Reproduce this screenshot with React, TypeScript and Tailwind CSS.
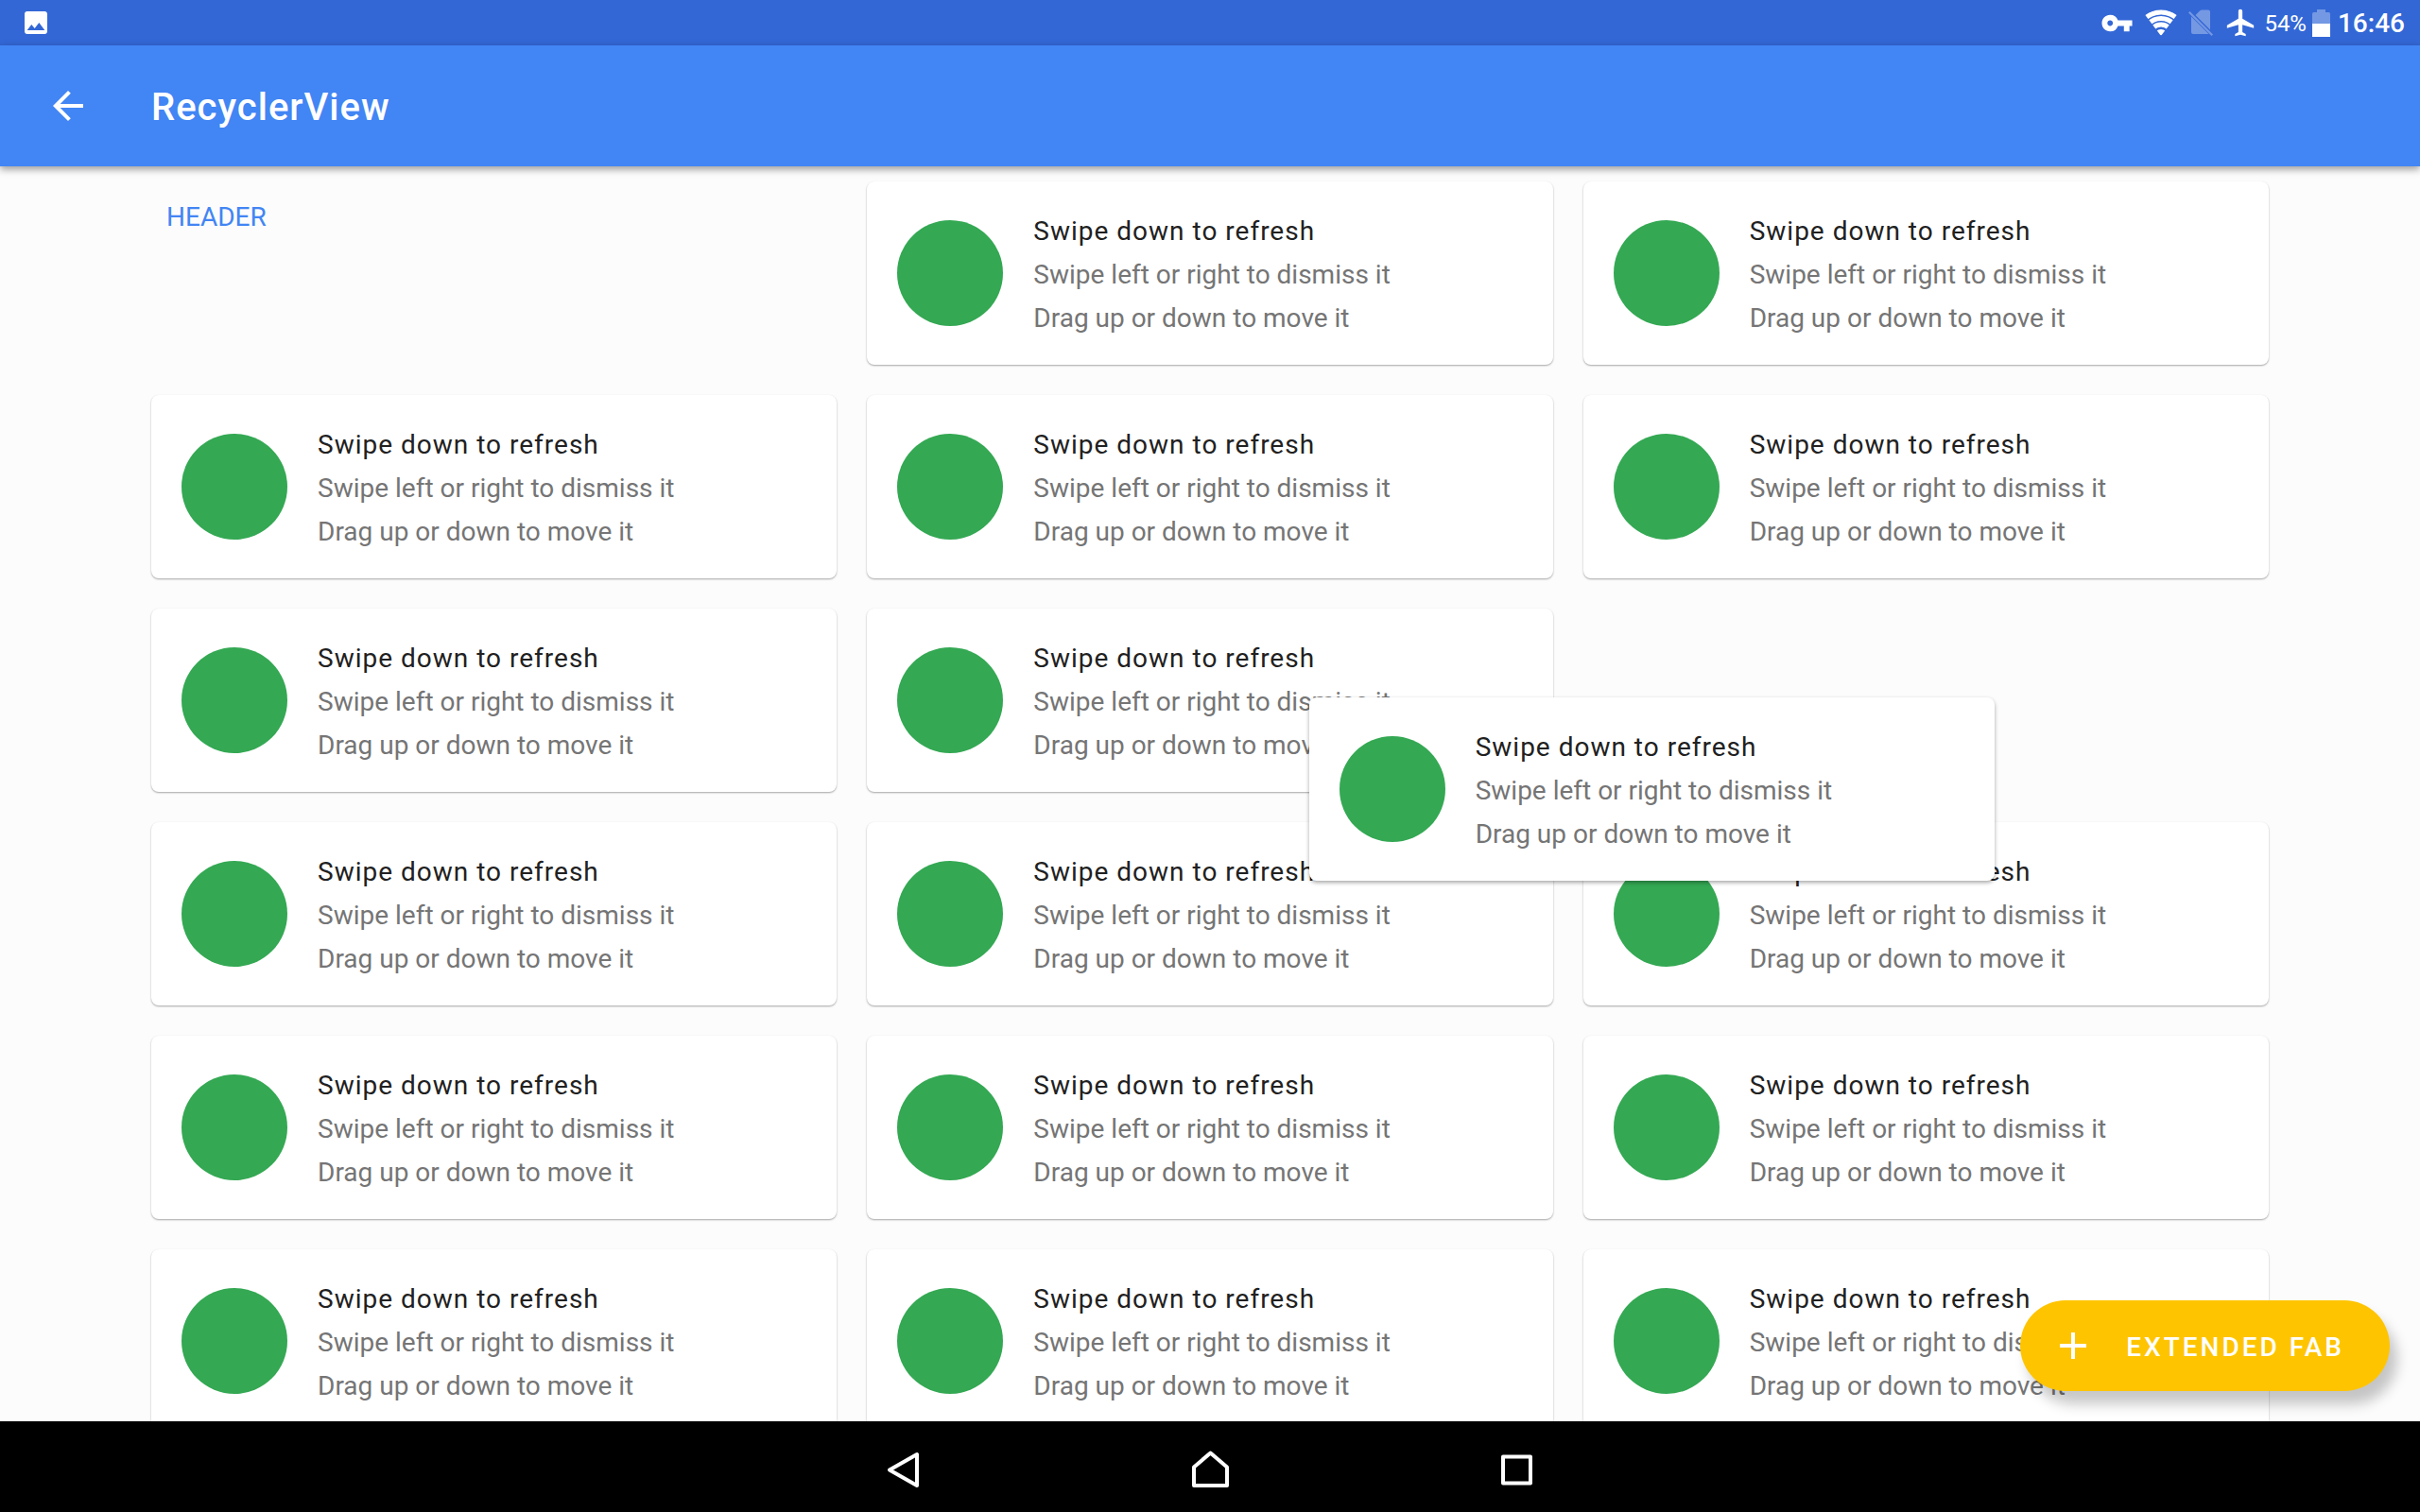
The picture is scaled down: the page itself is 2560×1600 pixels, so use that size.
import * as React from 'react';
import { MdAirplanemodeActive, MdArrowBack, MdImage, MdVpnKey } from 'react-icons/md';

type Item = { id: number; kind: 'header' | 'card' | 'dragged' };

const COLUMNS = 3;
const ROWS = 6;
const DRAGGED_INDEX = 8;

const items: Item[] = Array.from({ length: COLUMNS * ROWS }, (_, id) => {
  if (id === 0) return { id, kind: 'header' };
  if (id === DRAGGED_INDEX) return { id, kind: 'dragged' };
  return { id, kind: 'card' };
});

function WifiIcon() {
  return (
    <svg className="h-7 w-[34px]" viewBox="0 0 34 28" fill="none" aria-hidden="true">
      <clipPath id="wifi-fan">
        <path d="M0 5.5Q17 -5.5 34 5.5L17 28Z" />
      </clipPath>
      <g clipPath="url(#wifi-fan)" stroke="#fff" strokeWidth="5">
        <circle cx="17" cy="28" r="25" />
        <circle cx="17" cy="28" r="18.5" />
        <circle cx="17" cy="28" r="12" />
        <circle cx="17" cy="28" r="3" strokeWidth="8" />
      </g>
    </svg>
  );
}

function NoSimIcon() {
  return (
    <svg className="h-7 w-[26px]" viewBox="0 0 26 28" fill="none" aria-hidden="true">
      <g fill="#fff" opacity="0.32">
        <path d="M7.5 6 12 1.5Q13 .5 14.500 .5H21Q23 .5 23 2.500V21.500ZM3 7.500 21.500 26H5Q3 26 3 24Z" />
        <path d="M0 3.500 1.500 2 26 26.500 24.500 28Z" />
      </g>
    </svg>
  );
}

function BatteryIcon() {
  return (
    <svg className="h-[29px] w-[19px]" viewBox="0 0 19 29" aria-hidden="true">
      <path d="M0 5Q0 3 1.500 3H5V0H14V3H17.500Q19 3 19 5V15H0Z" fill="#fff" opacity="0.32" />
      <path d="M0 15H19V29H0Z" fill="#fff" />
    </svg>
  );
}

function StatusBar() {
  return (
    <div className="flex h-12 items-center justify-between bg-[#3367d6] pl-[22px] pr-4 text-white">
      <MdImage className="size-8" aria-hidden="true" />
      <div className="flex items-center">
        <MdVpnKey className="mr-3 size-[35px]" aria-hidden="true" />
        <WifiIcon />
        <span className="ml-3">
          <NoSimIcon />
        </span>
        <MdAirplanemodeActive className="ml-3 mr-2 size-[34px]" aria-hidden="true" />
        <span className="pt-0.5 text-2xl leading-none">54%</span>
        <span className="ml-1.5 mr-2">
          <BatteryIcon />
        </span>
        <span className="pt-0.5 text-[28px] font-medium leading-none">16:46</span>
      </div>
    </div>
  );
}

function AppBar() {
  return (
    <header className="relative z-10 flex h-32 items-center bg-[#4285f4] px-12 text-white shadow-[0_3px_8px_rgba(0,0,0,0.4)]">
      <button type="button" aria-label="Navigate up" className="mr-16 size-12">
        <MdArrowBack className="size-12" />
      </button>
      <h1 className="pt-1 text-[40px] font-medium leading-none tracking-wide">RecyclerView</h1>
    </header>
  );
}

function Card(props: { raised?: boolean }) {
  return (
    <article
      className={
        props.raised
          ? 'flex h-[194px] items-center gap-8 rounded-lg bg-white px-8 shadow-[0_2px_4px_rgba(0,0,0,0.35)]'
          : 'flex h-[194px] items-center gap-8 rounded-lg bg-white px-8 shadow-[0_1px_2px_rgba(0,0,0,0.35)]'
      }
    >
      <div className="size-28 shrink-0 rounded-full bg-[#34a853]" />
      <div className="pt-1 text-[28px] leading-[46px] text-[#757575]">
        <h2 className="tracking-[1px] text-[#212121]">Swipe down to refresh</h2>
        <p>Swipe left or right to dismiss it</p>
        <p>Drag up or down to move it</p>
      </div>
    </article>
  );
}

function ListItem(props: { item: Item }) {
  if (props.item.kind === 'header') {
    return <h2 className="px-4 pt-[22px] text-[28px] leading-8 text-[#4285f4]">HEADER</h2>;
  }
  if (props.item.kind === 'dragged') {
    return (
      <div className="relative z-10 -left-[290px] top-[94px]">
        <Card raised />
      </div>
    );
  }
  return <Card />;
}

function Fab() {
  return (
    <button
      type="button"
      className="absolute bottom-8 right-8 z-20 flex h-24 items-center gap-8 rounded-full bg-[#ffc400] pl-8 pr-12 text-[28px] font-medium tracking-[3px] text-white shadow-[8px_14px_14px_rgba(0,0,0,0.22)]"
    >
      <svg className="size-12" viewBox="0 0 24 24" fill="currentColor" aria-hidden="true">
        <path d="M19 13h-6v6h-2v-6H5v-2h6V5h2v6h6v2z" />
      </svg>
      <span className="pt-1">EXTENDED FAB</span>
    </button>
  );
}

function NavBar() {
  return (
    <nav className="flex h-24 shrink-0 items-center justify-center gap-[276px] bg-black pt-1.5">
      <button type="button" aria-label="Back" className="size-12">
        <svg className="size-12" viewBox="0 0 48 48" fill="none" stroke="#fff" strokeWidth="4" strokeLinejoin="round">
          <path d="M38 8V41L9 24.500Z" />
        </svg>
      </button>
      <button type="button" aria-label="Home" className="size-12">
        <svg className="size-12" viewBox="0 0 48 48" fill="none" stroke="#fff" strokeWidth="4" strokeLinejoin="round">
          <path d="M24.500 6.500 42 21.500V41H7V21.500Z" />
        </svg>
      </button>
      <button type="button" aria-label="Overview" className="size-12">
        <svg className="size-12" viewBox="0 0 48 48" fill="none" stroke="#fff" strokeWidth="4" strokeLinejoin="round">
          <path d="M10 10.500H39V38.500H10Z" />
        </svg>
      </button>
    </nav>
  );
}

export default function App() {
  return (
    <div className="flex h-screen flex-col overflow-hidden bg-[#fcfcfc] font-['Roboto',sans-serif]">
      <StatusBar />
      <AppBar />
      <div className="relative min-h-0 flex-1 overflow-hidden">
        <main className="grid grid-cols-3 gap-8 px-40 pt-4">
          {items.map((item) => (
            <ListItem key={item.id} item={item} />
          ))}
        </main>
        <Fab />
      </div>
      <NavBar />
    </div>
  );
}
